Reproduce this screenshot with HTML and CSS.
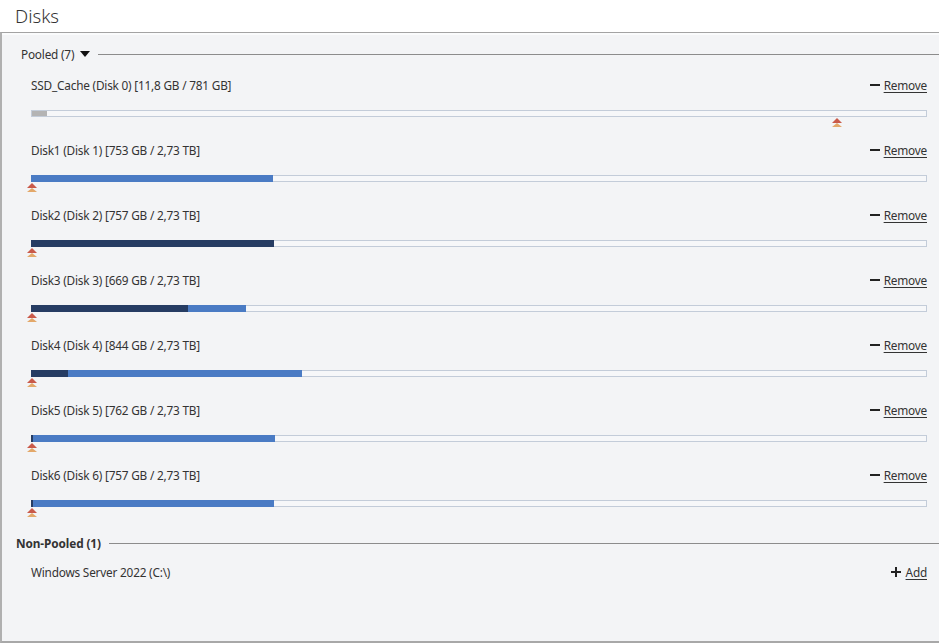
FILE: index.html
```html
<!DOCTYPE html>
<html lang="en">
<head>
    <meta charset="UTF-8">
    <title>Disks</title>
    <link rel="stylesheet" href="styles.css">
</head>
<body>
    <div class="page-title">Disks</div>

    <div class="panel">
        <!-- Pooled disks -->
        <div class="group">
            <div class="legend">
                <span class="legend-text">Pooled (7)</span>
                <span class="caret"></span>
            </div>

            <div class="disk">
                <div class="disk-head">
                    <span class="disk-name">SSD_Cache (Disk 0) [11,8 GB / 781 GB]</span>
                    <a class="action"><span class="minus"></span><span class="action-text">Remove</span></a>
                </div>
                <div class="bar">
                    <span class="fill fill-cache" style="width: 15px"></span>
                    <span class="marker" style="left: 805px"></span>
                </div>
            </div>

            <div class="disk">
                <div class="disk-head">
                    <span class="disk-name">Disk1 (Disk 1) [753 GB / 2,73 TB]</span>
                    <a class="action"><span class="minus"></span><span class="action-text">Remove</span></a>
                </div>
                <div class="bar">
                    <span class="fill fill-data" style="width: 242px"></span>
                    <span class="marker" style="left: 0"></span>
                </div>
            </div>

            <div class="disk">
                <div class="disk-head">
                    <span class="disk-name">Disk2 (Disk 2) [757 GB / 2,73 TB]</span>
                    <a class="action"><span class="minus"></span><span class="action-text">Remove</span></a>
                </div>
                <div class="bar">
                    <span class="fill fill-dup" style="width: 243px"></span>
                    <span class="marker" style="left: 0"></span>
                </div>
            </div>

            <div class="disk">
                <div class="disk-head">
                    <span class="disk-name">Disk3 (Disk 3) [669 GB / 2,73 TB]</span>
                    <a class="action"><span class="minus"></span><span class="action-text">Remove</span></a>
                </div>
                <div class="bar">
                    <span class="fill fill-dup" style="width: 157px"></span>
                    <span class="fill fill-data" style="width: 58px"></span>
                    <span class="marker" style="left: 0"></span>
                </div>
            </div>

            <div class="disk">
                <div class="disk-head">
                    <span class="disk-name">Disk4 (Disk 4) [844 GB / 2,73 TB]</span>
                    <a class="action"><span class="minus"></span><span class="action-text">Remove</span></a>
                </div>
                <div class="bar">
                    <span class="fill fill-dup" style="width: 37px"></span>
                    <span class="fill fill-data" style="width: 234px"></span>
                    <span class="marker" style="left: 0"></span>
                </div>
            </div>

            <div class="disk">
                <div class="disk-head">
                    <span class="disk-name">Disk5 (Disk 5) [762 GB / 2,73 TB]</span>
                    <a class="action"><span class="minus"></span><span class="action-text">Remove</span></a>
                </div>
                <div class="bar">
                    <span class="fill fill-dup" style="width: 2px"></span>
                    <span class="fill fill-data" style="width: 242px"></span>
                    <span class="marker" style="left: 0"></span>
                </div>
            </div>

            <div class="disk">
                <div class="disk-head">
                    <span class="disk-name">Disk6 (Disk 6) [757 GB / 2,73 TB]</span>
                    <a class="action"><span class="minus"></span><span class="action-text">Remove</span></a>
                </div>
                <div class="bar">
                    <span class="fill fill-dup" style="width: 2px"></span>
                    <span class="fill fill-data" style="width: 241px"></span>
                    <span class="marker" style="left: 0"></span>
                </div>
            </div>
        </div>

        <!-- Disks not in the pool -->
        <div class="group group-other">
            <div class="legend legend-bold">
                <span class="legend-text">Non-Pooled (1)</span>
            </div>

            <div class="disk disk-plain">
                <div class="disk-head">
                    <span class="disk-name">Windows Server 2022 (C:\)</span>
                    <a class="action"><span class="plus"></span><span class="action-text">Add</span></a>
                </div>
            </div>
        </div>
    </div>
</body>
</html>
```

FILE: styles.css
```css
* {
    margin: 0;
    padding: 0;
    box-sizing: border-box;
}

body {
    width: 939px;
    height: 643px;
    overflow: hidden;
    background: #fff;
    color: #333;
    font-family: 'Noto Sans', 'Open Sans', sans-serif;
    font-size: 11.8px;
    letter-spacing: -0.2px;
}

.page-title {
    height: 32px;
    padding-left: 15px;
    line-height: 31px;
    font-size: 18.5px;
    font-weight: 300;
    letter-spacing: 0;
    color: #333;
    background: #fff;
}

.panel {
    height: 611px;
    background: #f3f4f6;
    border-top: 1px solid #a3a3a3;
    border-left: 2px solid #b0b0b0;
    border-bottom: 2px solid #a8a8a8;
    padding-top: 11px;
    box-shadow: inset 0 4px 0 -2px #fafbfc;
}

.legend {
    display: flex;
    align-items: center;
    height: 20px;
    padding-left: 19px;
    margin-bottom: 11px;
    gap: 6px;
}

.legend::after {
    content: '';
    flex: 1;
    height: 1px;
    margin-left: 2px;
    background: #8c8c8c;
}

.legend-text {
    white-space: nowrap;
}

.legend-bold {
    padding-left: 14px;
    margin-bottom: 9px;
    font-weight: 700;
    letter-spacing: -0.1px;
}

.caret {
    width: 0;
    height: 0;
    border-left: 5px solid transparent;
    border-right: 5px solid transparent;
    border-top: 6px solid #111;
}

.group-other {
    margin-top: 3px;
}

.disk {
    height: 65px;
    padding: 0 12px 0 29px;
}

.disk-head {
    display: flex;
    justify-content: space-between;
    align-items: center;
    height: 20px;
}

.action {
    display: flex;
    align-items: center;
    gap: 4px;
    color: #333;
    cursor: pointer;
}

.action-text {
    text-decoration: underline;
    text-underline-offset: 2px;
}

.minus {
    width: 10px;
    height: 2px;
    background: #222;
}

.plus {
    position: relative;
    width: 10px;
    height: 10px;
    margin-right: 1px;
}

.plus::before,
.plus::after {
    content: '';
    position: absolute;
    background: #222;
}

.plus::before {
    left: 0;
    top: 4px;
    width: 10px;
    height: 2px;
}

.plus::after {
    left: 4px;
    top: 0;
    width: 2px;
    height: 10px;
}

.bar {
    position: relative;
    display: flex;
    height: 7px;
    margin-top: 15px;
    background: #f6f7f9;
    box-shadow: inset 0 0 0 1px #c3ccd9;
}

.fill {
    height: 100%;
}

.fill-cache {
    background: #b4b4b4;
    height: 5px;
    margin: 1px 0 0 1px;
}

.fill-data {
    background: #4a7bc4;
}

.fill-dup {
    background: #263c63;
}

/* stacked triangles under the bar */
.marker {
    position: absolute;
    top: 8px;
    width: 10px;
    height: 9px;
    margin-left: -4px;
}

.marker::before,
.marker::after {
    content: '';
    position: absolute;
    left: 0;
    border-left: 5px solid transparent;
    border-right: 5px solid transparent;
}

.marker::before {
    top: 0;
    border-bottom: 5px solid #c95a4a;
}

.marker::after {
    top: 5px;
    border-bottom: 4px solid #e3a86a;
}
```
